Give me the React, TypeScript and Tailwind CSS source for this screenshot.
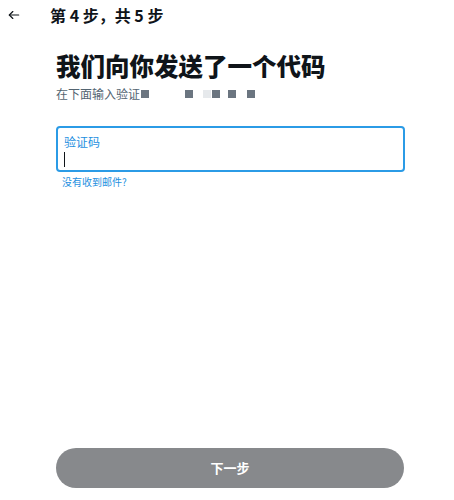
import React from "react";

export default function App() {
  const font = { fontFamily: '"Noto Sans CJK SC", "Noto Sans", sans-serif' };
  return (
    <div className="w-[454px] h-[500px] bg-white flex flex-col text-[#0f1419]" style={font}>
      <div className="h-[30px] flex items-center">
        <div className="w-[50px] pl-[7px] flex items-center">
          <svg width="14" height="14" viewBox="0 0 24 24" fill="none" stroke="#0f1419" strokeWidth="2" strokeLinecap="round" strokeLinejoin="round">
            <path d="M20 12H4" />
            <path d="M10 6l-6 6 6 6" />
          </svg>
        </div>
        <div className="text-[16px] font-bold leading-none">第 4 步，共 5 步</div>
      </div>
      <div className="ml-[56px] w-[349px] flex flex-col">
        <h1 className="mt-[21px] text-[24.5px] font-black leading-[30px] whitespace-nowrap">我们向你发送了一个代码</h1>
        <div className="mt-[5px] flex items-center text-[12px] leading-[16px] text-[#536471]">
          <span>在下面输入验证</span>
          <span className="inline-block w-[8px] h-[8px] bg-[#6b7580] ml-[1px]" />
          <span className="inline-block w-[8px] h-[8px] bg-[#6b7580] ml-[36px]" />
          <span className="inline-block w-[8px] h-[8px] bg-[#e6e9ec] ml-[10px]" />
          <span className="inline-block w-[8px] h-[8px] bg-[#6b7580] ml-[1px]" />
          <span className="inline-block w-[8px] h-[8px] bg-[#6b7580] ml-[8px]" />
          <span className="inline-block w-[8px] h-[8px] bg-[#6b7580] ml-[11px]" />
        </div>
        <div className="mt-[24px] h-[46px] rounded-[4px] border-2 border-[#2b9be6] px-[6px] pt-[7px] flex flex-col">
          <div className="text-[12px] leading-[14px] text-[#1d8fe0]">验证码</div>
          <div className="mt-[3px] w-[1px] h-[15px] bg-[#0f1419]" />
        </div>
        <div className="mt-[3px] pl-[6px] text-[10px] leading-[14px] text-[#1d8fe0]">没有收到邮件?</div>
      </div>
      <div className="flex-1" />
      <div className="ml-[56px] w-[348px] h-[40px] mb-[12px] rounded-full bg-[#87898c] flex items-center justify-center text-white text-[13px] font-bold">
        下一步
      </div>
    </div>
  );
}
